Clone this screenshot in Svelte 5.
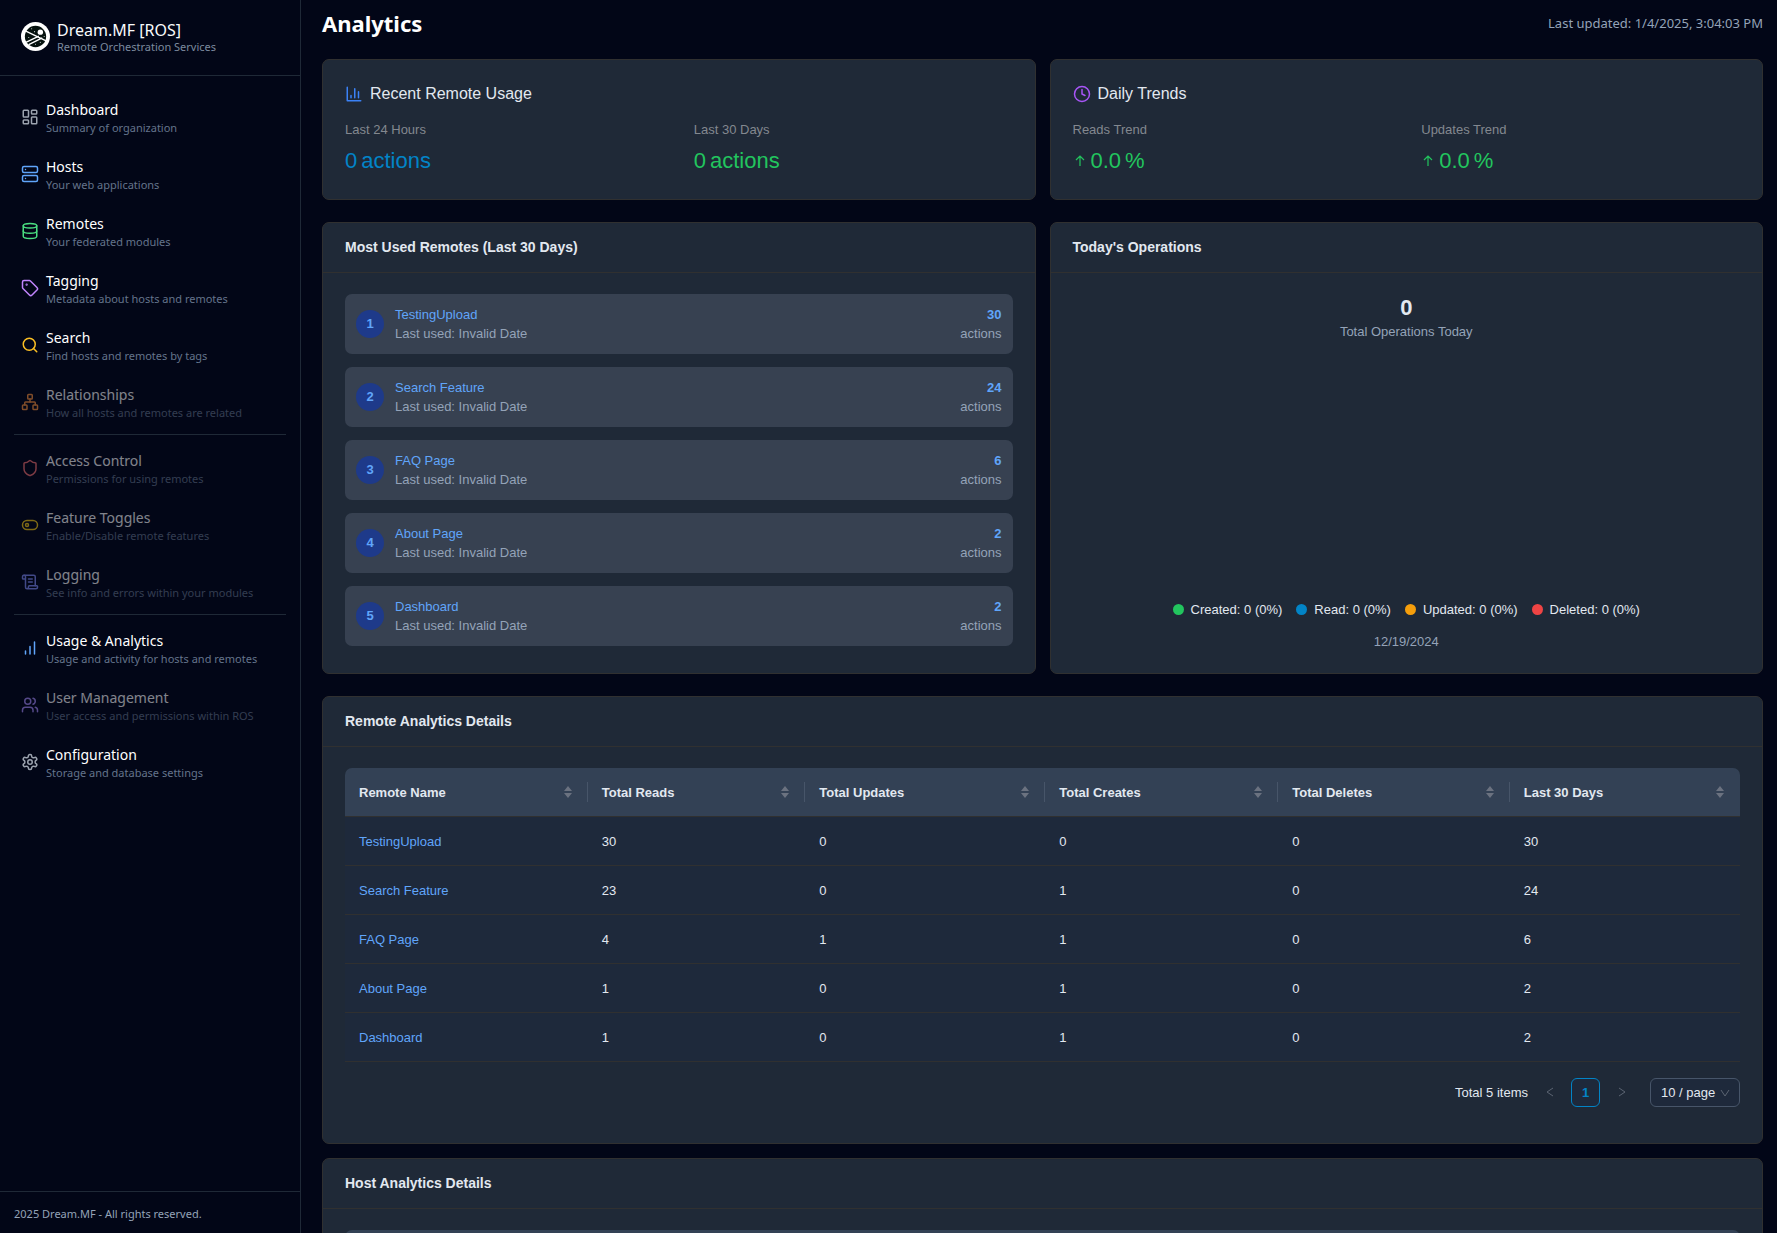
<script>
  const icons = {
    dashboard: '<rect width="7" height="9" x="3" y="3" rx="1"/><rect width="7" height="5" x="14" y="3" rx="1"/><rect width="7" height="9" x="14" y="12" rx="1"/><rect width="7" height="5" x="3" y="16" rx="1"/>',
    server: '<rect width="20" height="8" x="2" y="2" rx="2"/><rect width="20" height="8" x="2" y="14" rx="2"/><path d="M6 6h.01M6 18h.01"/>',
    database: '<ellipse cx="12" cy="5" rx="9" ry="3"/><path d="M3 5v14a9 3 0 0 0 18 0V5"/><path d="M3 12a9 3 0 0 0 18 0"/>',
    tag: '<path d="M12.586 2.586A2 2 0 0 0 11.172 2H4a2 2 0 0 0-2 2v7.172a2 2 0 0 0 .586 1.414l8.704 8.704a2.426 2.426 0 0 0 3.42 0l6.58-6.58a2.426 2.426 0 0 0 0-3.42z"/><circle cx="7.5" cy="7.5" r=".5" fill="currentColor"/>',
    search: '<circle cx="11" cy="11" r="8"/><path d="m21 21-4.3-4.3"/>',
    network: '<rect x="16" y="16" width="6" height="6" rx="1"/><rect x="2" y="16" width="6" height="6" rx="1"/><rect x="9" y="2" width="6" height="6" rx="1"/><path d="M5 16v-3a1 1 0 0 1 1-1h12a1 1 0 0 1 1 1v3"/><path d="M12 12V8"/>',
    shield: '<path d="M20 13c0 5-3.5 7.5-7.66 8.95a1 1 0 0 1-.67-.01C7.5 20.5 4 18 4 13V6a1 1 0 0 1 1-1c2 0 4.5-1.2 6.24-2.72a1.17 1.17 0 0 1 1.52 0C14.51 3.81 17 5 19 5a1 1 0 0 1 1 1z"/>',
    toggle: '<rect width="20" height="12" x="2" y="6" rx="6"/><circle cx="8" cy="12" r="2"/>',
    scroll: '<path d="M15 12h-5M15 8h-5"/><path d="M19 17V5a2 2 0 0 0-2-2H4"/><path d="M8 21h12a2 2 0 0 0 2-2v-1a1 1 0 0 0-1-1H11a1 1 0 0 0-1 1v1a2 2 0 1 1-4 0V5a2 2 0 1 0-4 0v2a1 1 0 0 0 1 1h3"/>',
    bars: '<path d="M12 20V10M18 20V4M6 20v-4"/>',
    users: '<path d="M16 21v-2a4 4 0 0 0-4-4H6a4 4 0 0 0-4 4v2"/><circle cx="9" cy="7" r="4"/><path d="M22 21v-2a4 4 0 0 0-3-3.87M16 3.13a4 4 0 0 1 0 7.75"/>',
    settings: '<path d="M12.22 2h-.44a2 2 0 0 0-2 2v.18a2 2 0 0 1-1 1.73l-.43.25a2 2 0 0 1-2 0l-.15-.08a2 2 0 0 0-2.73.73l-.22.38a2 2 0 0 0 .73 2.73l.15.1a2 2 0 0 1 1 1.72v.51a2 2 0 0 1-1 1.74l-.15.09a2 2 0 0 0-.73 2.73l.22.38a2 2 0 0 0 2.73.73l.15-.08a2 2 0 0 1 2 0l.43.25a2 2 0 0 1 1 1.73V20a2 2 0 0 0 2 2h.44a2 2 0 0 0 2-2v-.18a2 2 0 0 1 1-1.73l.43-.25a2 2 0 0 1 2 0l.15.08a2 2 0 0 0 2.73-.73l.22-.39a2 2 0 0 0-.73-2.73l-.15-.08a2 2 0 0 1-1-1.74v-.5a2 2 0 0 1 1-1.74l.15-.09a2 2 0 0 0 .73-2.73l-.22-.38a2 2 0 0 0-2.73-.73l-.15.08a2 2 0 0 1-2 0l-.43-.25a2 2 0 0 1-1-1.73V4a2 2 0 0 0-2-2z"/><circle cx="12" cy="12" r="3"/>',
    chart: '<path d="M3 3v18h18M18 17V9M13 17V5M8 17v-3"/>',
    clock: '<circle cx="12" cy="12" r="10"/><path d="M12 6v6l4 2"/>'
  };

  const navGroups = [
    [
      { title: 'Dashboard', sub: 'Summary of organization', icon: 'dashboard', tone: 'gray' },
      { title: 'Hosts', sub: 'Your web applications', icon: 'server', tone: 'blue' },
      { title: 'Remotes', sub: 'Your federated modules', icon: 'database', tone: 'green' },
      { title: 'Tagging', sub: 'Metadata about hosts and remotes', icon: 'tag', tone: 'purple' },
      { title: 'Search', sub: 'Find hosts and remotes by tags', icon: 'search', tone: 'amber' },
      { title: 'Relationships', sub: 'How all hosts and remotes are related', icon: 'network', tone: 'orange', off: true }
    ],
    [
      { title: 'Access Control', sub: 'Permissions for using remotes', icon: 'shield', tone: 'red', off: true },
      { title: 'Feature Toggles', sub: 'Enable/Disable remote features', icon: 'toggle', tone: 'yellow', off: true },
      { title: 'Logging', sub: 'See info and errors within your modules', icon: 'scroll', tone: 'indigo', off: true }
    ],
    [
      { title: 'Usage & Analytics', sub: 'Usage and activity for hosts and remotes', icon: 'bars', tone: 'blue' },
      { title: 'User Management', sub: 'User access and permissions within ROS', icon: 'users', tone: 'violet', off: true },
      { title: 'Configuration', sub: 'Storage and database settings', icon: 'settings', tone: 'gray' }
    ]
  ];

  const topRemotes = [
    { name: 'TestingUpload', count: 30 },
    { name: 'Search Feature', count: 24 },
    { name: 'FAQ Page', count: 6 },
    { name: 'About Page', count: 2 },
    { name: 'Dashboard', count: 2 }
  ];

  const operations = [
    { label: 'Created', tone: 'created' },
    { label: 'Read', tone: 'read' },
    { label: 'Updated', tone: 'updated' },
    { label: 'Deleted', tone: 'deleted' }
  ];

  const metrics = ['Total Reads', 'Total Updates', 'Total Creates', 'Total Deletes', 'Last 30 Days'];

  const remoteRows = [
    ['TestingUpload', 30, 0, 0, 0, 30],
    ['Search Feature', 23, 0, 1, 0, 24],
    ['FAQ Page', 4, 1, 1, 0, 6],
    ['About Page', 1, 0, 1, 0, 2],
    ['Dashboard', 1, 0, 1, 0, 2]
  ];
</script>

{#snippet icon(name, tone)}
  <svg class="icon {tone}" viewBox="0 0 24 24" aria-hidden="true">{@html icons[name]}</svg>
{/snippet}

{#snippet trend(label)}
  <div class="stat">
    <div class="stat-label">{label}</div>
    <div class="stat-value up">
      <svg class="arrow" viewBox="0 0 14 14" aria-hidden="true"><path d="M7 12V2M3 6l4-4 4 4" /></svg>
      <span>0.0</span><span>%</span>
    </div>
  </div>
{/snippet}

{#snippet dataTable(first, rows)}
  <table>
    <colgroup>
      <col class="c1" /><col class="c2" /><col class="c3" /><col class="c4" /><col class="c5" /><col class="c6" />
    </colgroup>
    <thead>
      <tr>
        {#each [first, ...metrics] as head}
          <th scope="col">
            <button class="sort" type="button">
              <span>{head}</span>
              <svg viewBox="0 0 8 14" aria-hidden="true"><path d="M4 1l4 5H0zM4 13L0 8h8z" /></svg>
            </button>
          </th>
        {/each}
      </tr>
    </thead>
    <tbody>
      {#each rows as row}
        <tr>
          {#each row as cell, i}
            <td>{#if i === 0}<a href="#remote">{cell}</a>{:else}{cell}{/if}</td>
          {/each}
        </tr>
      {/each}
    </tbody>
  </table>
{/snippet}

<div class="app">
  <aside>
    <header class="brand">
      <svg class="logo" viewBox="0 0 30 30" aria-hidden="true">
        <circle cx="15" cy="15" r="15" fill="#fff" />
        <circle cx="15" cy="15" r="11" fill="#06120f" />
        <g stroke="#fff" fill="none" stroke-width="1.4">
          <path d="M5 9.500l21 10M5 21l13.500-6.500M8 23.500l14-7" />
        </g>
        <circle cx="20" cy="10.500" r="2.800" fill="#fff" />
        <g fill="#cbd5d1">
          <circle cx="11" cy="7" r=".6" /><circle cx="14" cy="10" r=".6" /><circle cx="8" cy="16" r=".6" />
          <circle cx="24" cy="15" r=".6" /><circle cx="15" cy="23" r=".6" /><circle cx="20" cy="21" r=".6" />
        </g>
      </svg>
      <div>
        <div class="brand-name">Dream.MF [ROS]</div>
        <div class="brand-sub">Remote Orchestration Services</div>
      </div>
    </header>
    <nav>
      {#each navGroups as group}
        <ul>
          {#each group as item}
            <li>
              <a class="nav-item" class:off={item.off} href="#nav">
                {@render icon(item.icon, item.tone)}
                <span class="nav-text">
                  <span class="nav-title">{item.title}</span>
                  <span class="nav-sub">{item.sub}</span>
                </span>
              </a>
            </li>
          {/each}
        </ul>
      {/each}
    </nav>
    <footer>2025 Dream.MF - All rights reserved.</footer>
  </aside>

  <main>
    <div class="page-head">
      <h1>Analytics</h1>
      <span>Last updated: 1/4/2025, 3:04:03 PM</span>
    </div>

    <div class="pair">
      <section class="card summary">
        <h2>{@render icon('chart', 'bright')}Recent Remote Usage</h2>
        <div class="stats">
          <div class="stat">
            <div class="stat-label">Last 24 Hours</div>
            <div class="stat-value day"><span>0</span><span>actions</span></div>
          </div>
          <div class="stat">
            <div class="stat-label">Last 30 Days</div>
            <div class="stat-value up"><span>0</span><span>actions</span></div>
          </div>
        </div>
      </section>
      <section class="card summary">
        <h2>{@render icon('clock', 'grape')}Daily Trends</h2>
        <div class="stats">
          {@render trend('Reads Trend')}
          {@render trend('Updates Trend')}
        </div>
      </section>
    </div>

    <div class="pair">
      <section class="card">
        <h3>Most Used Remotes (Last 30 Days)</h3>
        <ol class="ranking">
          {#each topRemotes as remote, i}
            <li>
              <span class="rank">{i + 1}</span>
              <div class="who">
                <a href="#remote">{remote.name}</a>
                <div>Last used: Invalid Date</div>
              </div>
              <div class="count">
                <strong>{remote.count}</strong>
                <div>actions</div>
              </div>
            </li>
          {/each}
        </ol>
      </section>
      <section class="card operations">
        <h3>Today's Operations</h3>
        <div class="body today">
          <div class="total">0</div>
          <div class="muted">Total Operations Today</div>
          <ul class="legend">
            {#each operations as op}
              <li><span class="dot {op.tone}"></span>{op.label}: 0 (0%)</li>
            {/each}
          </ul>
          <div class="muted">12/19/2024</div>
        </div>
      </section>
    </div>

    <section class="card">
      <h3>Remote Analytics Details</h3>
      <div class="body">
        {@render dataTable('Remote Name', remoteRows)}
        <div class="pager">
          <span>Total 5 items</span>
          <button type="button" class="step" aria-label="Previous page" disabled>
            <svg viewBox="0 0 10 10" aria-hidden="true"><path d="M8 1L2 5l6 4" /></svg>
          </button>
          <button type="button" class="page">1</button>
          <button type="button" class="step" aria-label="Next page" disabled>
            <svg viewBox="0 0 10 10" aria-hidden="true"><path d="M2 1l6 4-6 4" /></svg>
          </button>
          <div class="size">
            <select aria-label="Page size">
              <option>10 / page</option>
              <option>20 / page</option>
              <option>50 / page</option>
            </select>
            <svg viewBox="0 0 10 10" aria-hidden="true"><path d="M1 2l4 6 4-6" /></svg>
          </div>
        </div>
      </div>
    </section>

    <section class="card">
      <h3>Host Analytics Details</h3>
      <div class="body">
        {@render dataTable('Host Name', [])}
      </div>
    </section>
  </main>
</div>

<style>
  :global(body) {
    background: #020617;
  }
  * {
    box-sizing: border-box;
  }
  h1,
  h2,
  h3,
  ul,
  ol {
    margin: 0;
    padding: 0;
    list-style: none;
  }
  a {
    color: #60a5fa;
    text-decoration: none;
  }
  button,
  select {
    margin: 0;
    padding: 0;
    border: 0;
    background: none;
    color: inherit;
    font: inherit;
  }
  .app {
    display: flex;
    height: 100vh;
    overflow: hidden;
    color: #e2e8f0;
    font-family: 'Liberation Sans', Arial, sans-serif;
    font-size: 13px;
    line-height: 19px;
  }

  /* Sidebar */
  aside {
    flex: 0 0 301px;
    display: flex;
    flex-direction: column;
    border-right: 1px solid #1f2937;
    font-family: 'Noto Sans', sans-serif;
  }
  .brand {
    display: flex;
    align-items: center;
    gap: 7px;
    height: 76px;
    padding: 0 21px 2px;
    border-bottom: 1px solid #1f2937;
  }
  .logo {
    width: 29px;
    height: 29px;
  }
  .brand-name {
    color: #f8fafc;
    font-size: 16px;
    line-height: 20px;
  }
  .brand-sub {
    color: #7c8a9e;
    font-size: 11px;
    line-height: 14px;
  }
  nav {
    flex: 1;
    padding: 8px 14px;
  }
  nav ul {
    padding: 4px 0;
  }
  nav ul + ul {
    border-top: 1px solid #1f2937;
  }
  .nav-item {
    display: flex;
    align-items: center;
    gap: 7px;
    height: 57px;
    padding: 0 7px;
  }
  .nav-item.off {
    opacity: 0.5;
  }
  .nav-text {
    padding-top: 3px;
  }
  .nav-title,
  .nav-sub {
    display: block;
  }
  .nav-title {
    color: #fff;
    font-size: 14px;
    line-height: 20px;
  }
  .nav-sub {
    color: #64748b;
    font-size: 11px;
    line-height: 16px;
  }
  footer {
    padding: 15px 14px 12px;
    border-top: 1px solid #1f2937;
    color: #94a3b8;
    font-size: 11px;
    line-height: 14px;
  }

  .icon {
    flex: none;
    width: 18px;
    height: 18px;
    fill: none;
    stroke: currentColor;
    stroke-width: 2;
    stroke-linecap: round;
    stroke-linejoin: round;
  }
  .gray { color: #9ca3af; }
  .blue { color: #60a5fa; }
  .green { color: #4ade80; }
  .purple { color: #c084fc; }
  .amber { color: #fbbf24; }
  .orange { color: #fb923c; }
  .red { color: #f87171; }
  .yellow { color: #facc15; }
  .indigo { color: #818cf8; }
  .violet { color: #a78bfa; }
  .bright { color: #3b82f6; }
  .grape { color: #a855f7; }

  /* Page */
  main {
    flex: 1;
    min-width: 0;
    padding: 0 14px 22px 21px;
    overflow-y: auto;
    scrollbar-width: none;
  }
  .page-head {
    display: flex;
    align-items: center;
    justify-content: space-between;
    height: 46px;
    margin-bottom: 13px;
    color: #94a3b8;
    font-family: 'Noto Sans', sans-serif;
  }
  h1 {
    color: #fff;
    font-size: 22px;
    line-height: 28px;
  }
  .pair {
    display: grid;
    grid-template-columns: 1fr 1fr;
    gap: 14px;
    margin-bottom: 22px;
  }
  .card {
    border: 1px solid #303030;
    border-radius: 7px;
    background: #1f2937;
  }
  .card + .card {
    margin-top: 14px;
  }
  .pair .card {
    margin-top: 0;
  }
  .summary {
    padding: 22px 22px 21px;
  }
  h2 {
    display: flex;
    align-items: center;
    gap: 7px;
    margin-bottom: 14px;
    font-size: 16px;
    font-weight: 400;
    line-height: 24px;
  }
  .stats {
    display: grid;
    grid-template-columns: 1fr 1fr;
    gap: 30px;
  }
  .stat-label {
    margin-bottom: 4px;
    color: #83888f;
    line-height: 20px;
  }
  .stat-value {
    display: flex;
    align-items: center;
    gap: 4px;
    font-size: 22px;
    line-height: 34px;
  }
  .day {
    color: #0284c7;
  }
  .up {
    color: #22c55e;
  }
  .arrow {
    width: 14px;
    height: 14px;
    fill: none;
    stroke: currentColor;
    stroke-width: 1.2;
  }
  h3 {
    height: 50px;
    padding: 0 22px;
    border-bottom: 1px solid #303030;
    font-size: 14px;
    line-height: 49px;
  }
  .body {
    padding: 21px 22px 22px;
  }

  .ranking {
    display: grid;
    gap: 13px;
    padding: 21px 22px 27px;
  }
  .ranking li {
    display: flex;
    align-items: center;
    gap: 11px;
    padding: 11px;
    border-radius: 7px;
    background: #374151;
    color: #94a3b8;
  }
  .rank {
    width: 28px;
    height: 28px;
    border-radius: 50%;
    background: #1e3a8a;
    color: #60a5fa;
    font-weight: 700;
    line-height: 28px;
    text-align: center;
  }
  .who {
    flex: 1;
  }
  .count {
    text-align: right;
  }
  .count strong {
    color: #60a5fa;
  }

  .operations {
    display: flex;
    flex-direction: column;
  }
  .today {
    flex: 1;
    display: flex;
    flex-direction: column;
    align-items: center;
  }
  .total {
    font-size: 22px;
    font-weight: 700;
    line-height: 28px;
  }
  .muted {
    color: #94a3b8;
  }
  .legend {
    display: flex;
    gap: 14px;
    margin-top: auto;
    margin-bottom: 13px;
  }
  .legend li {
    display: flex;
    align-items: center;
    gap: 7px;
  }
  .dot {
    width: 11px;
    height: 11px;
    border-radius: 50%;
  }
  .created { background: #22c55e; }
  .read { background: #0284c7; }
  .updated { background: #f59e0b; }
  .deleted { background: #ef4444; }

  /* Tables */
  table {
    width: 100%;
    border-collapse: separate;
    border-spacing: 0;
    table-layout: fixed;
  }
  .c1 { width: 17.4%; }
  .c2 { width: 15.6%; }
  .c3 { width: 17.2%; }
  .c4 { width: 16.7%; }
  .c5 { width: 16.6%; }
  .c6 { width: 16.5%; }
  th {
    height: 49px;
    padding: 0;
    border-bottom: 1px solid #303030;
    background: #334155;
  }
  th:first-child {
    border-top-left-radius: 7px;
  }
  th:last-child {
    border-top-right-radius: 7px;
  }
  .sort {
    display: flex;
    align-items: center;
    justify-content: space-between;
    width: 100%;
    height: 20px;
    padding: 0 15px 0 14px;
    border-right: 1px solid #475569;
    font-weight: 700;
  }
  th:last-child .sort {
    border-right-color: transparent;
  }
  .sort svg {
    width: 8px;
    height: 14px;
    fill: #6b7280;
  }
  td {
    height: 49px;
    padding: 0 14px;
    border-bottom: 1px solid #303030;
    background: #1e293b;
  }

  .pager {
    display: flex;
    align-items: center;
    justify-content: flex-end;
    gap: 7px;
    margin: 16px 0 14px;
  }
  .pager svg {
    width: 10px;
    height: 10px;
    fill: none;
    stroke: #5b6472;
  }
  .pager button {
    width: 29px;
    height: 29px;
  }
  .pager .page {
    border: 1px solid #0284c7;
    border-radius: 6px;
    background: #1e293b;
    color: #0284c7;
    font-weight: 700;
  }
  .size {
    position: relative;
    margin-left: 7px;
  }
  .size select {
    width: 90px;
    height: 29px;
    padding: 0 10px;
    appearance: none;
    border: 1px solid #475569;
    border-radius: 6px;
    background: #1e293b;
  }
  .size svg {
    position: absolute;
    top: 10px;
    right: 10px;
    pointer-events: none;
  }
</style>
